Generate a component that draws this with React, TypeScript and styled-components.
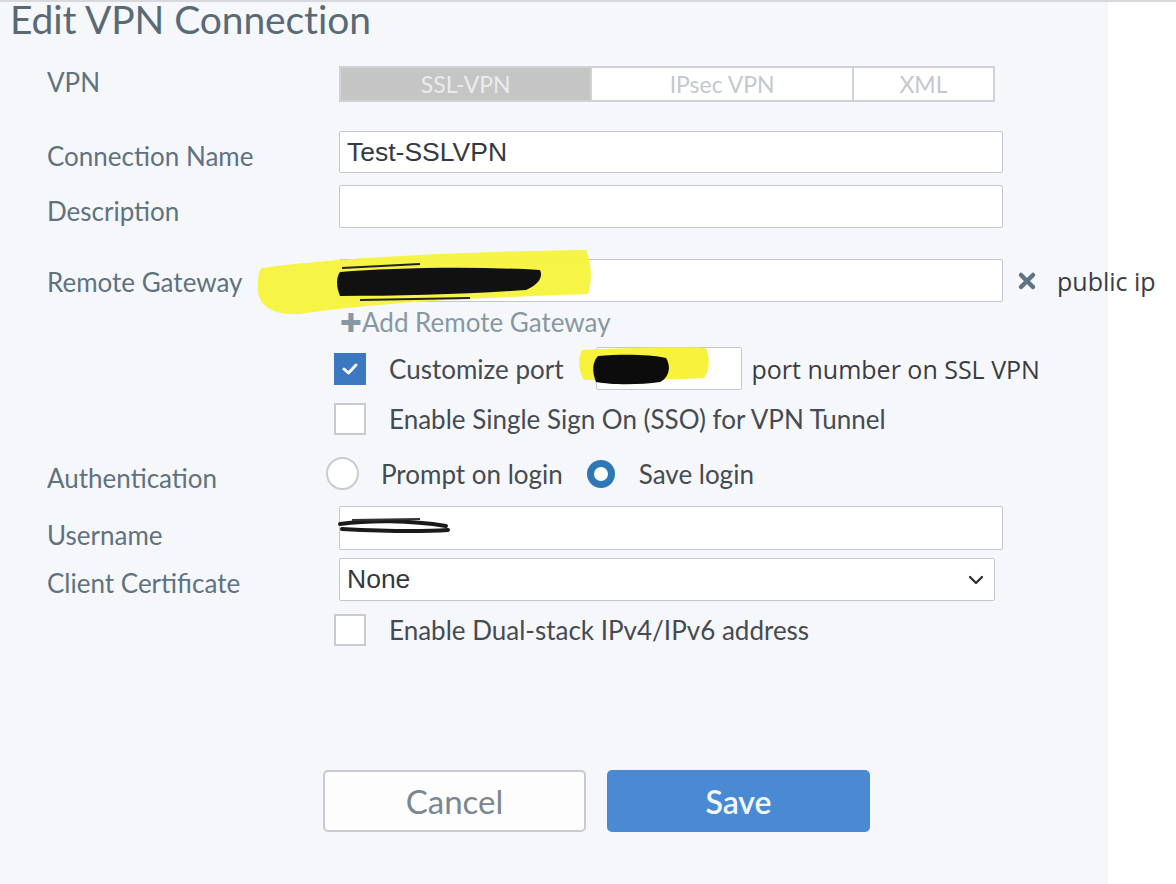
import React from "react";
import styled, { createGlobalStyle } from "styled-components";

const Global = createGlobalStyle`
  html, body { margin: 0; padding: 0; background: #ffffff; }
  body { font-family: Lato, "Noto Sans", sans-serif; }
  * { box-sizing: border-box; }
`;

const Page = styled.div`
  position: relative;
  width: 1176px;
  height: 884px;
  overflow: hidden;
  display: flex;
  border-top: 2px solid #d6d8db;
  background: #ffffff;
`;

const Panel = styled.div`
  width: 1108px;
  flex: none;
  height: 100%;
  background: #f6f7fb;
  display: flex;
  flex-direction: column;
  padding-left: 10px;
`;

const Title = styled.h1`
  margin: 0;
  font-family: Lato, sans-serif;
  font-weight: 400;
  font-size: 39px;
  line-height: 35px;
  color: #596a75;
  letter-spacing: -0.1px;
  white-space: nowrap;
`;

const Form = styled.div`
  display: flex;
  flex-direction: column;
  padding-left: 37px;
`;

const Row = styled.div<{ $mt: number }>`
  display: grid;
  grid-template-columns: 292px max-content;
  align-items: center;
  margin-top: ${(p) => p.$mt}px;
`;

const Label = styled.div<{ $dy?: number }>`
  font-family: Lato, sans-serif;
  font-size: 26px;
  color: #5f727e;
  line-height: 30px;
  white-space: nowrap;
  transform: translateY(${(p) => p.$dy ?? 0}px);
`;

const Field = styled.div`
  display: flex;
  align-items: center;
  white-space: nowrap;
`;

const Tabs = styled.div`
  display: flex;
  width: 656px;
  height: 36px;
  border: 2px solid #cfd3d6;
  background: #ffffff;
`;

const Tab = styled.div<{ $w: number; $active?: boolean }>`
  width: ${(p) => p.$w}px;
  display: flex;
  align-items: center;
  justify-content: center;
  font-family: Lato, sans-serif;
  font-size: 23px;
  background: ${(p) => (p.$active ? "#c5c5c5" : "#ffffff")};
  color: ${(p) => (p.$active ? "#ececec" : "#c4c8cc")};
  & + & { border-left: 2px solid #cfd3d6; }
`;

const Input = styled.div<{ $w: number; $h: number; $ml?: number }>`
  width: ${(p) => p.$w}px;
  height: ${(p) => p.$h}px;
  flex: none;
  margin-left: ${(p) => p.$ml ?? 0}px;
  border: 1.5px solid #c4c8cc;
  border-radius: 2px;
  background: #ffffff;
  display: flex;
  align-items: center;
  padding: 0 7px;
  font-family: "Liberation Sans", Arial, sans-serif;
  font-size: 26.5px;
  color: #333a3f;
`;

const Select = styled(Input)`
  justify-content: space-between;
  padding-right: 8px;
`;

const Clear = styled.span`
  display: inline-flex;
  margin-left: 14px;
`;

const Note = styled.span<{ $ml: number }>`
  margin-left: ${(p) => p.$ml}px;
  font-family: "Open Sans", sans-serif;
  font-size: 25px;
  color: #3a3d40;
  white-space: nowrap;
`;

const AddLink = styled.div`
  grid-column: 2;
  font-family: Lato, sans-serif;
  font-size: 26px;
  line-height: 28px;
  color: #8798a4;
  margin-left: 1px;
  white-space: nowrap;
`;

const Box = styled.span<{ $checked?: boolean }>`
  width: 32px;
  height: 32px;
  flex: none;
  margin-left: -5px;
  border: 2px solid ${(p) => (p.$checked ? "#3b78bf" : "#c9cccf")};
  background: ${(p) => (p.$checked ? "#3b78bf" : "#ffffff")};
  display: inline-flex;
  align-items: center;
  justify-content: center;
`;

const OptText = styled.span<{ $ml: number }>`
  margin-left: ${(p) => p.$ml}px;
  font-family: Lato, sans-serif;
  font-size: 26px;
  color: #454b50;
  white-space: nowrap;
`;

const Radio = styled.span<{ $checked?: boolean; $ml?: number }>`
  width: ${(p) => (p.$checked ? 28 : 33)}px;
  height: ${(p) => (p.$checked ? 28 : 33)}px;
  flex: none;
  margin-left: ${(p) => p.$ml ?? 0}px;
  border-radius: 50%;
  border: ${(p) => (p.$checked ? "7px solid #2f78b8" : "2px solid #c9cccf")};
  background: #ffffff;
`;

const Buttons = styled.div`
  display: flex;
  gap: 21px;
  margin-left: 313px;
`;

const Spacer = styled.div<{ $h: number }>`
  height: ${(p) => p.$h}px;
  flex: none;
`;

const Button = styled.button<{ $primary?: boolean }>`
  width: 263px;
  height: 62px;
  border-radius: 5px;
  border: 2px solid ${(p) => (p.$primary ? "#4a8ad2" : "#c9cbcd")};
  background: ${(p) => (p.$primary ? "#4a8ad2" : "#fdfdfe")};
  color: ${(p) => (p.$primary ? "#f2f7ff" : "#7a8690")};
  font-family: Lato, sans-serif;
  font-size: ${(p) => (p.$primary ? 32 : 33)}px;
  font-weight: ${(p) => (p.$primary ? 600 : 400)};
  padding: 0;
`;

const Overlay = styled.svg`
  position: absolute;
  left: 0;
  top: 0;
  pointer-events: none;
`;

export default function App() {
  return (
    <>
      <Global />
      <Page>
        <Panel>
          <Title>Edit VPN Connection</Title>
          <Form>
            <Row $mt={29}>
              <Label $dy={-2}>VPN</Label>
              <Field>
                <Tabs>
                  <Tab $w={251} $active>SSL-VPN</Tab>
                  <Tab $w={263}>IPsec VPN</Tab>
                  <Tab $w={142}>XML</Tab>
                </Tabs>
              </Field>
            </Row>
            <Row $mt={29}>
              <Label $dy={4}>Connection Name</Label>
              <Field>
                <Input $w={664} $h={42}>Test-SSLVPN</Input>
              </Field>
            </Row>
            <Row $mt={12}>
              <Label $dy={4}>Description</Label>
              <Field>
                <Input $w={664} $h={43} />
              </Field>
            </Row>
            <Row $mt={31}>
              <Label $dy={1}>Remote Gateway</Label>
              <Field>
                <Input $w={664} $h={43} />
                <Clear>
                  <svg width="20" height="20" viewBox="0 0 20 20">
                    <path d="M4 4 L16 16 M16 4 L4 16" stroke="#5f7480" strokeWidth="4.5" strokeLinecap="round" />
                  </svg>
                </Clear>
                <Note $ml={20}>public ip</Note>
              </Field>
            </Row>
            <Row $mt={6}>
              <AddLink>✚Add Remote Gateway</AddLink>
            </Row>
            <Row $mt={11}>
              <span />
              <Field>
                <Box $checked>
                  <svg width="16" height="14" viewBox="0 0 16 14">
                    <path d="M2 7 L6.5 11 L14 3" stroke="#ffffff" strokeWidth="3" fill="none" strokeLinecap="round" strokeLinejoin="round" />
                  </svg>
                </Box>
                <OptText $ml={23}>Customize port</OptText>
                <Input $w={146} $h={43} $ml={32} />
                <Note $ml={10}>port number on SSL VPN</Note>
              </Field>
            </Row>
            <Row $mt={13}>
              <span />
              <Field>
                <Box />
                <OptText $ml={23}>Enable Single Sign On (SSO) for VPN Tunnel</OptText>
              </Field>
            </Row>
            <Row $mt={22}>
              <Label $dy={4}>Authentication</Label>
              <Field>
                <Radio $ml={-13} />
                <OptText $ml={22}>Prompt on login</OptText>
                <Radio $checked $ml={24} />
                <OptText $ml={24}>Save login</OptText>
              </Field>
            </Row>
            <Row $mt={16}>
              <Label $dy={7}>Username</Label>
              <Field>
                <Input $w={664} $h={44} />
              </Field>
            </Row>
            <Row $mt={8}>
              <Label $dy={3}>Client Certificate</Label>
              <Field>
                <Select $w={656} $h={43}>
                  None
                  <svg width="20" height="20" viewBox="0 0 20 20">
                    <path d="M4 7 L10 13 L16 7" stroke="#2f3336" strokeWidth="2.4" fill="none" strokeLinecap="round" strokeLinejoin="round" />
                  </svg>
                </Select>
              </Field>
            </Row>
            <Row $mt={13}>
              <span />
              <Field>
                <Box />
                <OptText $ml={23}>Enable Dual-stack IPv4/IPv6 address</OptText>
              </Field>
            </Row>
          </Form>
          <Spacer $h={124} />
          <Buttons>
            <Button>Cancel</Button>
            <Button $primary>Save</Button>
          </Buttons>
        </Panel>
        <Overlay width="1176" height="884" viewBox="0 0 1176 884">
          <path
            d="M262 266 C320 258 430 250 586 248 C592 262 592 280 588 292 C480 296 380 300 300 312 C268 314 256 300 258 282 C258 274 259 268 262 266 Z"
            fill="#f6f33a"
            opacity="0.95"
          />
          <path
            d="M340 270 C390 266 470 264 540 268 C544 276 536 284 526 288 C470 292 400 294 340 294 C336 284 336 276 340 270 Z"
            fill="#111111"
          />
          <path d="M342 266 L420 262 M360 298 L470 296" stroke="#222" strokeWidth="2" />
          <path
            d="M582 348 C620 346 680 344 706 346 C710 356 710 368 704 376 C660 378 620 378 584 378 C578 368 578 356 582 348 Z"
            fill="#f6f33a"
          />
          <path
            d="M598 354 C620 352 650 352 666 356 C672 366 668 376 660 380 C640 383 612 383 596 380 C592 370 592 360 598 354 Z"
            fill="#0c0c0c"
          />
          <path d="M340 522 C370 518 410 518 446 524 M342 527 C380 529 420 530 448 528" stroke="#1a1a1a" strokeWidth="4" fill="none" strokeLinecap="round" />
          <path d="M352 518 L420 517" stroke="#333" strokeWidth="2" />
        </Overlay>
      </Page>
    </>
  );
}
